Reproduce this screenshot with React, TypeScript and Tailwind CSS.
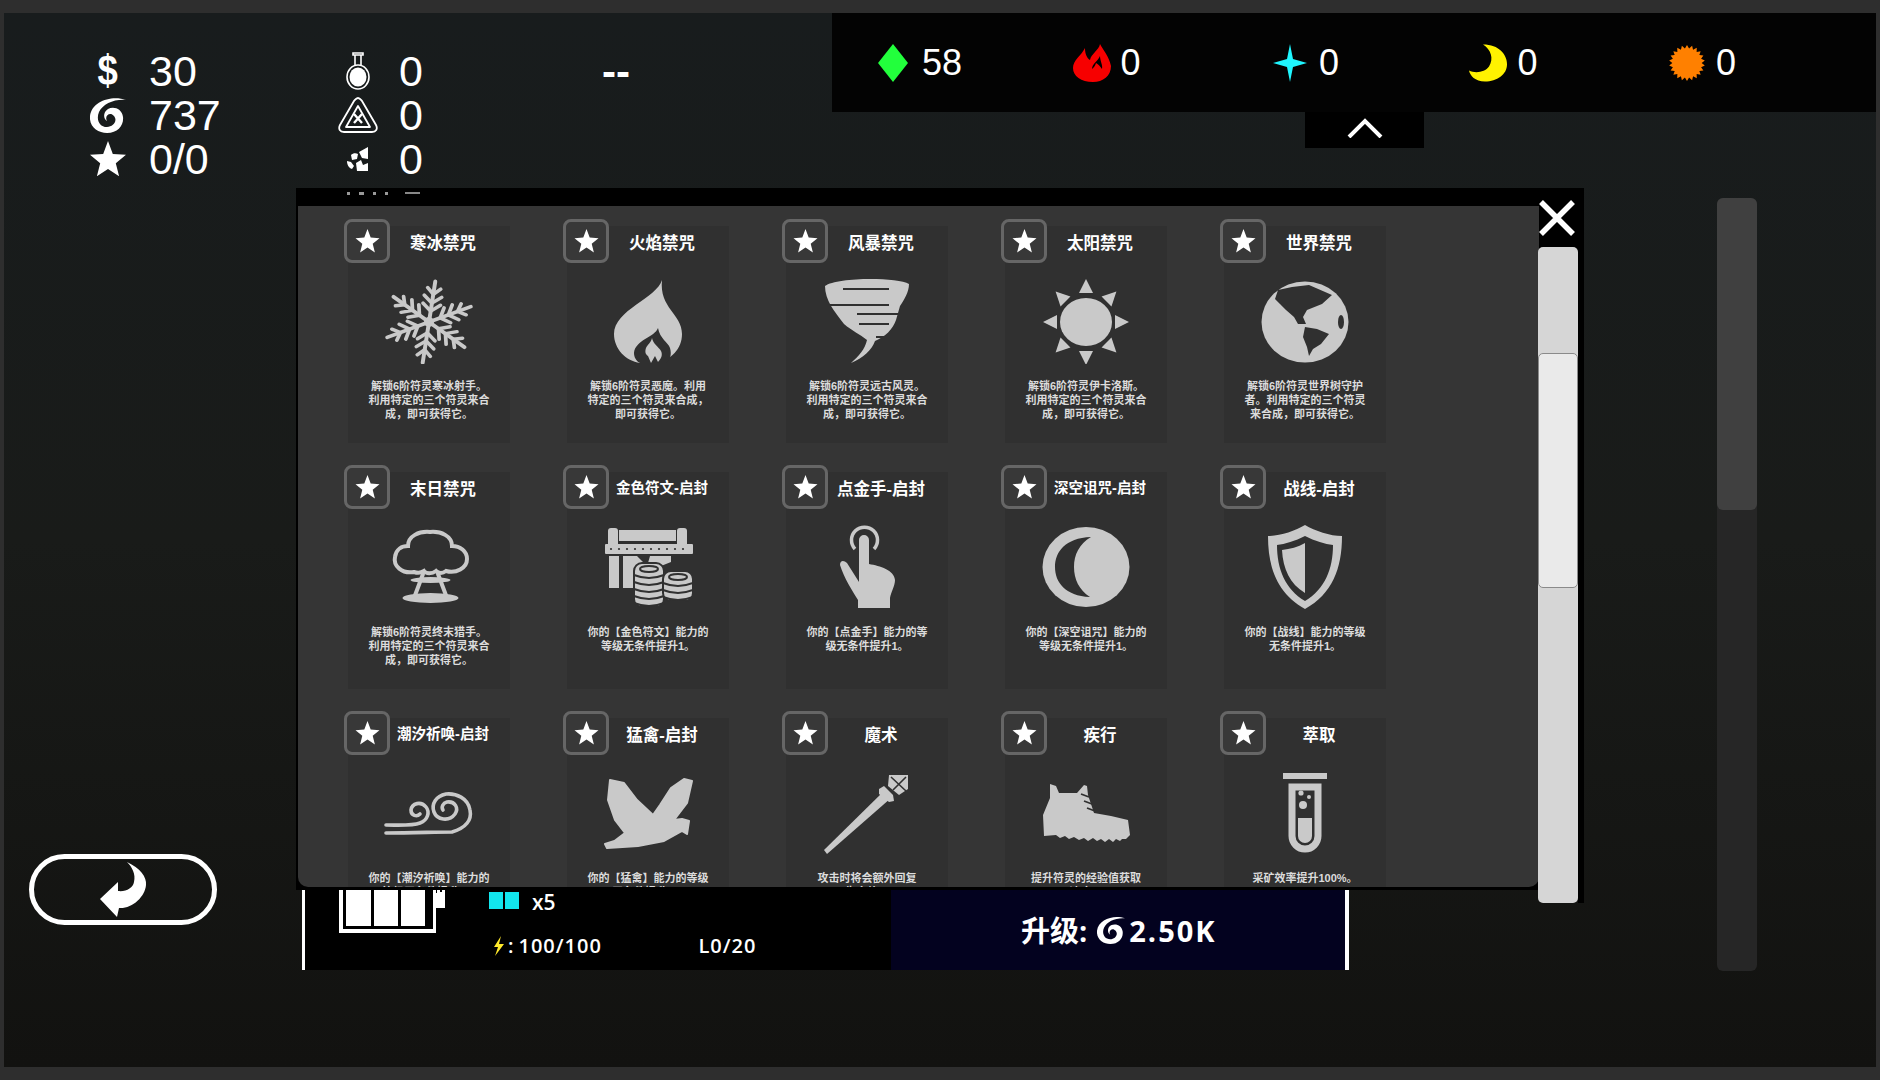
import type { ReactNode } from "react";

const STAR = "12,0 15.2,8.6 24,9.2 17.2,14.8 19.4,23.5 12,18.6 4.6,23.5 6.8,14.8 0,9.2 8.8,8.6";
const GRAY = "#c9c9c9";
const DARK = "#303030";

function Swirl({ className }: { className: string }) {
  return (
    <svg viewBox="0 0 36 36" className={className} fill="#fff">
      <path d="M36 3C22-2 2 4 0 19c-1 11 8 17 17 17 11 0 17-8 16-16-1-8-9-11-15-8-5 3-5 10-1 12-3-5 3-10 7-5 4 5-1 11-7 11-8 0-11-8-8-15 4-8 15-13 27-12z" />
    </svg>
  );
}

function Snowflake() {
  return (
    <svg viewBox="0 0 90 86" className="w-[90px] h-[86px]" stroke={GRAY} fill="none" strokeLinecap="round">
      <g transform="translate(45 44) scale(1.1 1) translate(-45 -44)">
        {[0, 60, 120, 180, 240, 300].map((a) => (
          <g key={a} transform={`rotate(${a + 8} 45 44)`}>
            <path d="M45 44V3" strokeWidth="3.6" />
            <path d="M45 33l-8-7M45 33l8-7M45 25l-8-7M45 25l8-7M45 16l-6-6M45 16l6-6" strokeWidth="3.4" />
          </g>
        ))}
      </g>
      <circle cx="45" cy="44" r="5" fill={GRAY} stroke="none" />
    </svg>
  );
}

function Flame() {
  return (
    <svg viewBox="0 0 90 86" className="w-[90px] h-[86px]">
      <path fill={GRAY} d="M59 2C54 20 11 32 11 56c0 15 12 27 26 29h16c15-3 26-14 26-29C79 36 56 30 59 2z" />
      <path fill={DARK} d="M55 50c-3 9-23 12-24 25 0 4 2 8 6 10h26c4-3 6-8 4-15-2-6-10-9-12-20z" />
      <path fill={GRAY} d="M49 60c-1 5-5 7-6 10-1 3-1 6 2 8l3 7 4-7 3 6c3-3 5-7 3-11-2-4-8-7-9-13z" />
    </svg>
  );
}

function Tornado() {
  return (
    <svg viewBox="0 0 90 86" className="w-[90px] h-[86px]">
      <path fill={GRAY} d="M3 8C15-1 75-1 87 6c0 8-5 16-9 22l-4 14c-3 9-11 17-21 21-3 9-12 17-24 22 8-7 14-14 16-23-7-6-15-9-23-16C12 33 3 22 3 8z" />
      <path stroke={DARK} strokeWidth="2" fill="none" d="M21 11h46M6 27h61M35 36h43M37 46h30M54 59h19" />
    </svg>
  );
}

function Sun() {
  return (
    <svg viewBox="0 0 90 86" className="w-[90px] h-[86px]" fill={GRAY}>
      <ellipse cx="45" cy="44" rx="26" ry="24" />
      {[0, 45, 90, 135, 180, 225, 270, 315].map((a) => (
        <polygon key={a} points="38,15 52,15 45,1" transform={`rotate(${a} 45 44)`} />
      ))}
    </svg>
  );
}

function Globe() {
  return (
    <svg viewBox="0 0 90 86" className="w-[90px] h-[86px]">
      <ellipse cx="45" cy="44" rx="43.5" ry="40.5" fill={GRAY} />
      <path fill={DARK} d="M15 21L18 12L32 9L49 7L72 17L62 26L47 32L43 39L46 46L38 46L34 39L26 32L20 26Z" />
      <path fill={DARK} d="M45 49l12 2 12 5-8 10-8 5-4 7-2-9-4-10z" />
      <ellipse cx="81" cy="44" rx="3" ry="7" fill={DARK} />
    </svg>
  );
}

function MushroomCloud() {
  return (
    <svg viewBox="0 0 90 86" className="w-[90px] h-[86px]" fill="none" stroke={GRAY} strokeWidth="4" strokeLinecap="round">
      <path d="M30 48C18 50 9 42 11 33c1-8 7-11 13-11 0-10 11-15 22-14 11-1 22 4 22 14 8 0 15 5 15 13 0 9-11 15-21 12-4 3-8 2-10 0-4 3-10 3-12 0-3 2-7 2-10 1z" />
      <path d="M39 50l-9 24M54 50l9 24" />
      <ellipse cx="46.5" cy="56" rx="20" ry="3" fill={GRAY} stroke="none" />
      <ellipse cx="46.5" cy="74" rx="28" ry="5" fill={GRAY} stroke="none" />
    </svg>
  );
}

function ChestCoins() {
  const coin = (cx: number, top: number, n: number) => (
    <g>
      <rect x={cx - 15} y={top} width="30" height={n * 7 + 9} rx="8" fill={GRAY} stroke={DARK} strokeWidth="2" />
      {Array.from({ length: n }).map((_, i) => (
        <path key={i} d={`M${cx - 15} ${top + 12 + i * 7}q15 6 30 0`} stroke={DARK} strokeWidth="2" fill="none" />
      ))}
      <ellipse cx={cx} cy={top + 6} rx="9" ry="3" fill="none" stroke={DARK} strokeWidth="2" />
    </g>
  );
  return (
    <svg viewBox="0 0 90 86" className="w-[90px] h-[86px]" fill={GRAY}>
      <rect x="5" y="4" width="10" height="20" rx="3" />
      <rect x="74" y="4" width="10" height="20" rx="3" />
      <rect x="16" y="6" width="57" height="11" />
      <rect x="2" y="20" width="88" height="10" rx="1" />
      {[8, 16, 24, 32, 40, 48, 56, 64, 72, 80].map((x) => (
        <circle key={x} cx={x} cy="25" r="1.1" fill={DARK} />
      ))}
      <rect x="6" y="32" width="10" height="32" />
      <path d="M20 32h14l6 6 3 8 4-14h21v6l-20 8-10 4v14H20z" />
      {coin(46, 39, 5)}
      {coin(75, 47, 3)}
    </svg>
  );
}

function TouchHand() {
  return (
    <svg viewBox="0 0 90 86" className="w-[90px] h-[86px]">
      <path d="M33 25a13 13 0 1 1 19 0" fill="none" stroke={GRAY} strokeWidth="3.5" />
      <path fill={GRAY} d="M37 16a5 5 0 0 1 10 0v24c11 2 25 6 26 16 0 6-4 12-5 18v10H36v-8C30 66 22 54 18 41c0-5 4-5 7-2l12 19z" />
    </svg>
  );
}

function Moon() {
  return (
    <svg viewBox="0 0 90 86" className="w-[90px] h-[86px]">
      <ellipse cx="45" cy="43" rx="43.5" ry="40" fill={GRAY} />
      <path fill={DARK} d="M50 13C24 14 14 28 14 43s10 29 35 30C38 66 33 55 33 43s5-23 17-30z" />
    </svg>
  );
}

function Shield() {
  return (
    <svg viewBox="0 0 90 86" className="w-[90px] h-[86px]">
      <path fill={GRAY} d="M45 1c10 6 25 11 37 11 0 33-10 58-37 73C18 70 8 45 8 12c12 0 27-5 37-11z" />
      <path fill={DARK} d="M45 12c10 5 20 8 28 9 0 24-8 44-28 56-20-12-28-32-28-56 8-1 18-4 28-9z" />
      <path fill={GRAY} d="M45 19v50C30 60 23 45 22 26c8-1 16-3 23-7z" />
    </svg>
  );
}

function Wind() {
  return (
    <svg viewBox="0 0 90 86" className="w-[90px] h-[86px]" fill="none" stroke={GRAY} strokeWidth="3.6" strokeLinecap="round">
      <path d="M2 63c28 0 48-1 66-1 14-4 20-12 18-22-2-12-14-17-24-16-10 2-15 10-12 18 3 8 15 10 21 2 4-6 0-13-8-12-4 1-6 5-4 8" />
      <path d="M2 55c13 0 26 1 34-2 8-3 10-11 6-16-5-6-14-4-15 3 0 6 6 7 9 4" />
    </svg>
  );
}

function Bird() {
  return (
    <svg viewBox="0 0 90 86" className="w-[90px] h-[86px]" fill={GRAY} stroke={GRAY} strokeWidth="2" strokeLinejoin="round">
      <path d="M7 10L5 30L12 50L22 63L11.5 71L2 74L4 78L35 76L61 71L79 61L84 64L86 51L79 49L71 50L84 33L89 11L81 9L68 18L57 35L50 45L34 30L21 13Z" />
    </svg>
  );
}

function Staff() {
  return (
    <svg viewBox="0 0 90 86" className="w-[90px] h-[86px]" fill={GRAY}>
      <polygon points="2,80 5,84 69,28 62,21" />
      <path d="M57 19l5-3 9 9 1 6-5 1-10-8z" />
      <path d="M67 5h19v14l-9 6-11-9z" />
      <path d="M69 7l15 14M84 7L71 20" stroke={DARK} strokeWidth="1.6" />
    </svg>
  );
}

function Boot() {
  return (
    <svg viewBox="0 0 90 86" className="w-[90px] h-[86px]" fill={GRAY}>
      <path d="M9 14L15 16L18 23L36 23L43 15L46 16L47 25L53 43L70 46L87 50L89 65L85 69L81 69L79 71L75 69L72 72L68 69L64 72L60 69L56 71L52 68L47 71L43 68L38 70L33 67L28 69L24 66L19 68L15 65L3 66L2 45L9 28Z" />
      <path d="M40 24l8 3M43 31l8 3M46 38l8 3" stroke={DARK} strokeWidth="1.8" />
    </svg>
  );
}

function TestTube() {
  return (
    <svg viewBox="0 0 90 86" className="w-[90px] h-[86px]">
      <rect x="23" y="3" width="44" height="6" fill={GRAY} />
      <path d="M32 17h26v49a13 13 0 0 1-26 0z" fill={DARK} stroke={GRAY} strokeWidth="7" />
      <path d="M38 48h14v18a7 7 0 0 1-14 0z" fill={GRAY} />
      <circle cx="41" cy="23" r="2.6" fill={GRAY} />
      <circle cx="49" cy="27" r="2" fill={GRAY} />
      <circle cx="43" cy="35" r="4" fill={GRAY} />
    </svg>
  );
}

const cards: { title: string; small?: boolean; icon: ReactNode; lines: string[] }[] = [
  { title: "寒冰禁咒", icon: <Snowflake />, lines: ["解锁6阶符灵寒冰射手。", "利用特定的三个符灵来合", "成，即可获得它。"] },
  { title: "火焰禁咒", icon: <Flame />, lines: ["解锁6阶符灵恶魔。利用", "特定的三个符灵来合成，", "即可获得它。"] },
  { title: "风暴禁咒", icon: <Tornado />, lines: ["解锁6阶符灵远古风灵。", "利用特定的三个符灵来合", "成，即可获得它。"] },
  { title: "太阳禁咒", icon: <Sun />, lines: ["解锁6阶符灵伊卡洛斯。", "利用特定的三个符灵来合", "成，即可获得它。"] },
  { title: "世界禁咒", icon: <Globe />, lines: ["解锁6阶符灵世界树守护", "者。利用特定的三个符灵", "来合成，即可获得它。"] },
  { title: "末日禁咒", icon: <MushroomCloud />, lines: ["解锁6阶符灵终末猎手。", "利用特定的三个符灵来合", "成，即可获得它。"] },
  { title: "金色符文-启封", small: true, icon: <ChestCoins />, lines: ["你的【金色符文】能力的", "等级无条件提升1。"] },
  { title: "点金手-启封", icon: <TouchHand />, lines: ["你的【点金手】能力的等", "级无条件提升1。"] },
  { title: "深空诅咒-启封", small: true, icon: <Moon />, lines: ["你的【深空诅咒】能力的", "等级无条件提升1。"] },
  { title: "战线-启封", icon: <Shield />, lines: ["你的【战线】能力的等级", "无条件提升1。"] },
  { title: "潮汐祈唤-启封", small: true, icon: <Wind />, lines: ["你的【潮汐祈唤】能力的", "等级无条件提升1。"] },
  { title: "猛禽-启封", icon: <Bird />, lines: ["你的【猛禽】能力的等级", "无条件提升1。"] },
  { title: "魔术", icon: <Staff />, lines: ["攻击时将会额外回复", "生命值。"] },
  { title: "疾行", icon: <Boot />, lines: ["提升符灵的经验值获取", "速度。"] },
  { title: "萃取", icon: <TestTube />, lines: ["采矿效率提升100%。"] },
];

function Card({ title, small, icon, lines }: (typeof cards)[number]) {
  return (
    <div className="w-[219px] h-[246px] pl-[4px] pt-[7px]">
      <div className="relative w-[162px] h-[217px] bg-[#303030] flex flex-col">
        <div className="absolute -left-[4px] -top-[7px] w-[46px] h-[44px] rounded-[8px] border-[3px] border-[#666666] bg-[#383838] flex items-center justify-center">
          <svg viewBox="0 0 24 24" className="w-[25px] h-[24px]" fill="#fff">
            <polygon points={STAR} />
          </svg>
        </div>
        <div
          className={`ml-[42px] w-[106px] h-[34px] shrink-0 flex items-center justify-center font-bold text-white whitespace-nowrap ${
            small ? "text-[14.5px]" : "text-[16.5px]"
          }`}
        >
          {title}
        </div>
        <div className="mt-[18px] h-[86px] shrink-0 flex justify-center">{icon}</div>
        <div className="mt-[15px] text-[11px] leading-[14px] font-bold text-[#dcdcdc] text-center whitespace-nowrap">
          {lines.map((l) => (
            <div key={l}>{l}</div>
          ))}
        </div>
      </div>
    </div>
  );
}

function StatRow({ icon, value }: { icon: ReactNode; value: string }) {
  return (
    <div className="h-[44px] flex items-center">
      <div className="w-[48px] flex justify-center">{icon}</div>
      <span className="ml-[17px] text-[43px] leading-none text-white">{value}</span>
    </div>
  );
}

const currencies: { value: string; icon: ReactNode }[] = [
  {
    value: "58",
    icon: (
      <svg viewBox="0 0 30 38" className="w-[30px] h-[38px]">
        <polygon points="15,0 30,19 15,38 0,19" fill="#22ff3c" />
      </svg>
    ),
  },
  {
    value: "0",
    icon: (
      <svg viewBox="0 0 38 38" className="w-[38px] h-[38px]">
        <path fill="#f70000" d="M27 0c3 6 9 12 11 22 0 10-8 16-18 16C8 38 0 32 0 24c0-8 8-12 12-20 0 6 2 10 5 12 1-6 9-10 10-16z" />
        <path fill="#000" d="M27 12c0 5 3 9 2 13-2-3-4-5-6-6-1 3-2 4-4 6 0-5 6-8 8-13z" />
      </svg>
    ),
  },
  {
    value: "0",
    icon: (
      <svg viewBox="0 0 34 38" className="w-[34px] h-[38px]">
        <path fill="#1ff6ff" d="M17 0l3 15 14 4-14 4-3 15-3-15-14-4 14-4z" />
      </svg>
    ),
  },
  {
    value: "0",
    icon: (
      <svg viewBox="0 0 39 37" className="w-[39px] h-[38px]">
        <path fill="#fff200" d="M14 0c16 0 24 10 24 20s-10 17-22 17C6 37 1 31 0 26c6 3 16 2 20-4 5-8 2-17-6-22z" />
      </svg>
    ),
  },
  {
    value: "0",
    icon: (
      <svg viewBox="0 0 38 38" className="w-[36px] h-[38px]">
        <polygon
          fill="#ff8000"
          points={Array.from({ length: 44 })
            .map((_, i) => {
              const a = (i * Math.PI) / 22;
              const r = i % 2 ? 15.5 : 19;
              return `${(19 + r * Math.sin(a)).toFixed(1)},${(19 - r * Math.cos(a)).toFixed(1)}`;
            })
            .join(" ")}
        />
      </svg>
    ),
  },
];

export default function App() {
  return (
    <div className="w-[1880px] h-[1080px] bg-[#2e2e2e] pt-[13px] px-[4px] pb-[13px] font-['Liberation_Sans','Noto_Sans_CJK_SC',sans-serif]">
      <div className="h-full bg-gradient-to-b from-[#181c1d] via-[#191b19] to-[#121210]">
        {/* HUD */}
        <div className="h-[175px] flex items-start">
          <div className="ml-[80px] mt-[36px] w-[250px]">
            <StatRow icon={<span className="text-[42px] leading-none font-bold text-white scale-x-[0.87]">$</span>} value="30" />
            <StatRow icon={<Swirl className="w-[36px] h-[36px]" />} value="737" />
            <StatRow
              icon={
                <svg viewBox="0 0 24 24" className="w-[38px] h-[36px]" fill="#fff">
                  <polygon points={STAR} />
                </svg>
              }
              value="0/0"
            />
          </div>
          <div className="mt-[36px] w-[268px]">
            <StatRow
              icon={
                <svg viewBox="0 0 24 38" className="w-[24px] h-[38px]" fill="none" stroke="#fff" strokeWidth="1.6">
                  <path d="M7 1h10v2H7zM9 3v10M15 3v10" />
                  <ellipse cx="12" cy="25" rx="11" ry="12" />
                  <ellipse cx="12" cy="25" rx="8.5" ry="9.5" fill="#fff" stroke="none" />
                </svg>
              }
              value="0"
            />
            <StatRow
              icon={
                <svg viewBox="0 0 40 36" className="w-[40px] h-[36px]" fill="none" stroke="#fff" strokeWidth="1.8" strokeLinejoin="round">
                  <path d="M20 1c2 0 3 2 4 3l14 24c2 4 0 7-4 7H6c-4 0-6-3-4-7L16 4c1-1 2-3 4-3z" />
                  <path d="M20 9l12 21H8z" />
                  <path d="M16 17l8 9M16 26l8-9" strokeWidth="2.4" />
                </svg>
              }
              value="0"
            />
            <StatRow
              icon={
                <svg viewBox="0 0 24 24" className="w-[24px] h-[24px]" fill="#fff">
                  <path d="M22 0v12l-6-1-3-6zM5 8c2-2 5-2 7-1l-1 5-5 1zM1 14l4 1 3 4-2 3c-3-1-5-4-5-8zM10 16l5-3 2 5 5-2v8H11z" />
                </svg>
              }
              value="0"
            />
          </div>
          <div className="mt-[38px] text-[42px] leading-none font-bold text-white">--</div>
          <div className="ml-auto w-[1044px] flex flex-col">
            <div className="h-[99px] bg-[#030303] flex items-center pl-[41px]">
              {currencies.map((c, i) => (
                <div key={i} className="w-[198.5px] flex items-center">
                  <div className="w-[40px] flex justify-center">{c.icon}</div>
                  <span className="ml-[9px] text-[36px] leading-none text-white">{c.value}</span>
                </div>
              ))}
            </div>
            <div className="ml-[473px] w-[119px] h-[36px] pb-[5px] bg-black flex items-center justify-center">
              <svg viewBox="0 0 36 20" className="w-[36px] h-[20px]" fill="none" stroke="#fff" strokeWidth="4">
                <path d="M2 19L18 3l16 16" />
              </svg>
            </div>
          </div>
        </div>

        <div className="flex items-start">
          {/* back button */}
          <div className="w-[292px] shrink-0 pl-[25px] pt-[666px]">
            <div className="w-[188px] h-[71px] rounded-full border-[5px] border-white flex items-center justify-center">
              <svg viewBox="0 0 47 55" className="w-[47px] h-[55px] -mt-[1px]" fill="#fff">
                <path d="M27 0c13 6 20 15 19 23-1 12-14 24-27 23l-2 9L0 37l18-17v9c8 1 15-3 16-9 2-8-2-15-7-20z" />
              </svg>
            </div>
          </div>

          {/* spell window */}
          <div className="w-[1288px] shrink-0">
            <div className="h-[702px] bg-black flex items-start">
              <div className="w-[1243px] shrink-0">
                <div className="h-[18px] pt-[4px] pl-[51px] flex gap-[9px]">
                  <div className="w-[3px] h-[3px] bg-[#999999]" />
                  <div className="w-[5px] h-[3px] bg-[#999999]" />
                  <div className="w-[3px] h-[3px] bg-[#999999]" />
                  <div className="w-[3px] h-[3px] bg-[#999999]" />
                  <div className="ml-[8px] w-[15px] h-[2px] bg-[#888888]" />
                </div>
                <div className="ml-[2px] h-[681px] bg-[#353535] rounded-b-[10px] overflow-hidden pl-[46px] pt-[13px]">
                  <div className="grid grid-cols-[repeat(5,219px)]">
                    {cards.map((c) => (
                      <Card key={c.title} {...c} />
                    ))}
                  </div>
                </div>
              </div>
              <div className="w-[45px] h-[715px] shrink-0 flex flex-col">
                <div className="h-[59px] shrink-0 flex items-center justify-center pr-[9px]">
                  <svg viewBox="0 0 36 36" className="w-[36px] h-[36px]" stroke="#fff" strokeWidth="5.5">
                    <path d="M2 2l32 32M34 2L2 34" />
                  </svg>
                </div>
                <div className="h-[656px] w-[46px] -ml-[1px] border-r-[6px] border-black">
                  <div className="h-full w-full rounded-[5px] bg-[#d6d6d6] pt-[106px]">
                    <div className="h-[235px] rounded-[5px] bg-[#eaeaea] border border-[#8a8a8a]" />
                  </div>
                </div>
              </div>
            </div>

            {/* upgrade bar */}
            <div className="ml-[6px] w-[1047px] h-[80px] bg-black border-l-[3px] border-r-[4px] border-white flex font-['Open_Sans','Noto_Sans_CJK_SC',sans-serif]">
              <div className="w-[586px] shrink-0 pl-[34px] flex items-start">
                <svg viewBox="0 0 106 43" className="w-[106px] h-[43px] shrink-0" fill="#fff">
                  <path d="M0 0h4v39h90V0h3v43H0z" />
                  <rect x="7" y="0" width="25" height="36" />
                  <rect x="35" y="0" width="24" height="36" />
                  <rect x="62" y="0" width="24" height="36" />
                  <path d="M94 3h4V0h3v2h2V0h3v18H97v5h-3z" />
                </svg>
                <div className="ml-[44px] pt-[2px] text-white">
                  <div className="h-[17px] flex items-center">
                    <div className="w-[14px] h-[17px] bg-[#12e6ee]" />
                    <div className="ml-[2px] w-[14px] h-[17px] bg-[#12e6ee]" />
                    <span className="ml-[13px] mt-[3px] text-[21px] leading-none font-semibold">x5</span>
                  </div>
                  <div className="mt-[27px] h-[20px] flex items-center text-[20px] leading-none font-semibold tracking-[1px] whitespace-nowrap">
                    <svg viewBox="0 0 12 20" className="ml-[4px] w-[12px] h-[20px] shrink-0" fill="#ffe92b">
                      <path d="M8 0L1 11h4l-3 9 9-12H6z" />
                    </svg>
                    <span className="ml-[3px]">:</span>
                    <span className="ml-[4px] w-[180px]">100/100</span>
                    <span>L0/20</span>
                  </div>
                </div>
              </div>
              <div className="flex-1 bg-[#03021f] pl-[130px] flex items-center text-white font-bold">
                <span className="text-[29px] leading-none">升级:</span>
                <Swirl className="ml-[10px] w-[28px] h-[28px]" />
                <span className="ml-[4px] text-[29px] leading-none font-bold tracking-[2px]">2.50K</span>
              </div>
            </div>
          </div>

          {/* background scroll rail */}
          <div className="ml-[133px] mt-[10px] w-[40px] h-[773px] rounded-[6px] bg-[#262626]">
            <div className="h-[312px] rounded-[6px] bg-[#404040]" />
          </div>
        </div>
      </div>
    </div>
  );
}
